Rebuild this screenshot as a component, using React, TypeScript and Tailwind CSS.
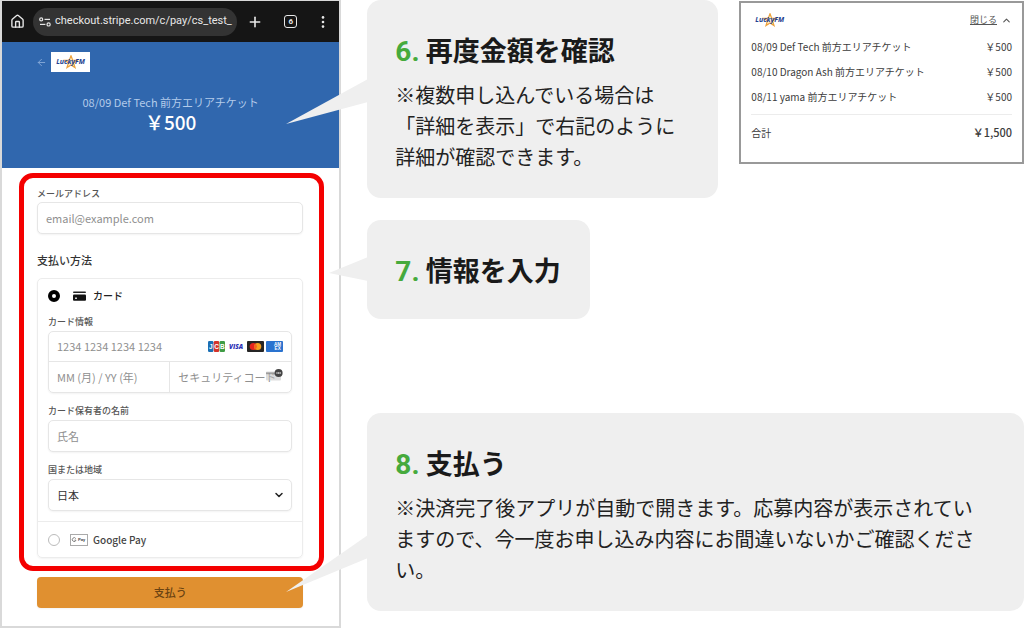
import type { ReactNode } from 'react';
import { ArrowLeft, ChevronDown, ChevronUp, House, Plus } from 'lucide-react';
import clsx from 'clsx';

interface TicketItem {
    name: string;
    price: string;
}

const items: TicketItem[] = [
    { name: '08/09 Def Tech 前方エリアチケット', price: '￥500' },
    { name: '08/10 Dragon Ash 前方エリアチケット', price: '￥500' },
    { name: '08/11 yama 前方エリアチケット', price: '￥500' },
];

const fieldClass =
    'block w-full h-8 rounded-[5px] border border-[#e6e6e6] bg-white px-2 text-[11px] text-[#333] shadow-xs placeholder:text-[#8f8f8f]';
const labelClass = 'block text-[9px] leading-3 font-medium text-[#555]';

function Logo() {
    return (
        <span className="relative inline-flex items-center justify-center">
            <svg viewBox="0 0 16 14" className="absolute h-[14px] w-4" aria-hidden="true">
                <path
                    d="M8 0.8 L9.6 5 L14.2 5.2 L10.6 8 L12 12.6 L8 10 L4 12.6 L5.4 8 L1.8 5.2 L6.4 5 Z"
                    fill="#fff3d8"
                    stroke="#eda13a"
                    strokeWidth="1.2"
                />
            </svg>
            <span className="relative font-['Open_Sans',sans-serif] text-[7px] leading-[14px] font-bold text-[#23408f] italic">
                LuckyFM
            </span>
        </span>
    );
}

function BrowserBar() {
    return (
        <div className="flex h-[41px] items-center bg-[#151515] pr-[14px] pl-2 text-[#e8e8e8]">
            <button type="button" aria-label="ホーム">
                <House className="h-[15px] w-[15px]" strokeWidth={2.2} />
            </button>
            <div className="ml-2 flex h-7 min-w-0 flex-1 items-center gap-1 rounded-full bg-[#333] pl-[6px]">
                <svg viewBox="0 0 12 10" className="h-[10px] w-3 shrink-0" fill="none" stroke="currentColor" strokeWidth="1.2">
                    <circle cx="2.2" cy="2.4" r="1.5" />
                    <path d="M5.5 2.4 H11" />
                    <circle cx="9.6" cy="7.4" r="1.6" />
                    <path d="M1 7.4 H6.4" />
                </svg>
                <span className="font-[Roboto,sans-serif] text-[11px] whitespace-nowrap">
                    checkout.stripe.com/c/pay/cs_test_
                </span>
            </div>
            <button type="button" aria-label="新しいタブ" className="ml-[10px]">
                <Plus className="h-4 w-4" strokeWidth={2.4} />
            </button>
            <button
                type="button"
                className="ml-[21px] flex h-[13px] w-[13px] items-center justify-center rounded-[3px] border-[1.5px] border-current font-[Roboto,sans-serif] text-[8px] leading-none font-bold"
            >
                6
            </button>
            <button type="button" aria-label="メニュー" className="ml-6">
                <svg viewBox="0 0 4 14" className="h-[14px] w-1" fill="currentColor">
                    <circle cx="2" cy="2.4" r="1.3" />
                    <circle cx="2" cy="7" r="1.3" />
                    <circle cx="2" cy="11.6" r="1.3" />
                </svg>
            </button>
        </div>
    );
}

function CardBrands() {
    return (
        <div className="flex gap-[2px]">
            <svg viewBox="0 0 17 11" className="h-[11px] w-[17px]">
                <rect x="0" y="0" width="5.4" height="11" rx="1.2" fill="#1b6fb4" />
                <rect x="5.8" y="0" width="5.4" height="11" rx="1.2" fill="#d4342b" />
                <rect x="11.6" y="0" width="5.4" height="11" rx="1.2" fill="#3f9c45" />
                <g fill="#fff" fontFamily="Liberation Sans" fontWeight="bold" fontSize="6.5" textAnchor="middle">
                    <text x="2.7" y="7.8">J</text>
                    <text x="8.5" y="7.8">C</text>
                    <text x="14.3" y="7.8">B</text>
                </g>
            </svg>
            <svg viewBox="0 0 18 11" className="h-[11px] w-[18px]">
                <text x="9" y="8" fill="#2b2fb5" fontFamily="Open Sans" fontStyle="italic" fontWeight="800" fontSize="6.4" textAnchor="middle">
                    VISA
                </text>
            </svg>
            <svg viewBox="0 0 17 11" className="h-[11px] w-[17px]">
                <rect width="17" height="11" rx="1" fill="#252525" />
                <circle cx="6.3" cy="5.5" r="3.6" fill="#e5241d" />
                <circle cx="10.7" cy="5.5" r="3.6" fill="#f5a01e" />
                <path d="M8.5 2.65 A3.6 3.6 0 0 1 8.5 8.35 A3.6 3.6 0 0 1 8.5 2.65" fill="#f2651f" />
            </svg>
            <svg viewBox="0 0 17 11" className="h-[11px] w-[17px]">
                <rect width="17" height="11" rx="1" fill="#2a73cf" />
                <g fill="#fff" fontFamily="Liberation Sans" fontWeight="bold" fontSize="4.6">
                    <text x="8" y="5.2">AM</text>
                    <text x="8.6" y="9.2">EX</text>
                </g>
            </svg>
        </div>
    );
}

function PaymentForm() {
    return (
        <div className="mt-[5px] mr-[15px] ml-[17px] rounded-[14px] border-5 border-[#f40000] pt-[10px] pr-4 pb-2 pl-[13px]">
            <label htmlFor="email" className={labelClass}>メールアドレス</label>
            <input id="email" type="email" placeholder="email@example.com" className={clsx(fieldClass, 'mt-[2px]')} />

            <h2 className="mt-[18px] text-[11px] leading-4 font-medium text-[#333]">支払い方法</h2>

            <div className="mt-[10px] rounded-[5px] border border-[#ececec] shadow-xs">
                <div className="px-[10px] pt-[9px] pb-[10px]">
                    <div className="flex h-4 items-center">
                        <input
                            id="pay-card"
                            type="radio"
                            name="method"
                            defaultChecked
                            className="h-3 w-3 appearance-none rounded-full border-4 border-black bg-white"
                        />
                        <label htmlFor="pay-card" className="flex items-center text-[10px] leading-4 font-medium text-[#222]">
                            <svg viewBox="0 0 13 10" className="mr-[7px] ml-[13px] h-[10px] w-[13px]">
                                <rect y="0.5" width="13" height="1.6" rx="0.8" fill="#222" />
                                <rect y="3.4" width="13" height="6.4" rx="1" fill="#111" />
                                <rect x="2" y="6.6" width="2" height="1.2" fill="#fff" />
                            </svg>
                            カード
                        </label>
                    </div>

                    <label htmlFor="card-number" className={clsx(labelClass, 'mt-3')}>カード情報</label>
                    <div className="mt-[3px] rounded-[5px] border border-[#e6e6e6] shadow-xs">
                        <div className="flex h-[30px] items-center border-b border-[#e6e6e6] px-2">
                            <input
                                id="card-number"
                                type="text"
                                placeholder="1234 1234 1234 1234"
                                className="min-w-0 flex-1 text-[11px] placeholder:text-[#8f8f8f]"
                            />
                            <CardBrands />
                        </div>
                        <div className="flex h-[30px]">
                            <input
                                type="text"
                                aria-label="有効期限"
                                placeholder="MM (月) / YY (年)"
                                className="w-1/2 border-r border-[#e6e6e6] px-2 text-[11px] placeholder:text-[#8f8f8f]"
                            />
                            <div className="relative w-1/2">
                                <input
                                    type="text"
                                    aria-label="セキュリティコード"
                                    placeholder="セキュリティコード"
                                    className="h-full w-full pl-2 text-[11px] placeholder:text-[#8f8f8f]"
                                />
                                <svg viewBox="0 0 18 12" className="absolute top-[7px] right-2 h-3 w-[18px]">
                                    <rect x="1" y="2.5" width="15" height="9" rx="1" fill="#bbb" fillOpacity="0.5" />
                                    <rect x="1" y="3.4" width="15" height="1.8" fill="#777" fillOpacity="0.6" />
                                    <circle cx="13.6" cy="4" r="4" fill="#444" />
                                    <path d="M11.4 4 H15.8" stroke="#ddd" strokeWidth="1.6" strokeDasharray="1.2 0.4" />
                                </svg>
                            </div>
                        </div>
                    </div>

                    <label htmlFor="holder" className={clsx(labelClass, 'mt-3')}>カード保有者の名前</label>
                    <input id="holder" type="text" placeholder="氏名" className={clsx(fieldClass, 'mt-[3px]')} />

                    <label htmlFor="country" className={clsx(labelClass, 'mt-3')}>国または地域</label>
                    <div className="relative mt-[3px]">
                        <select id="country" className={clsx(fieldClass, 'appearance-none')}>
                            <option>日本</option>
                        </select>
                        <ChevronDown
                            className="pointer-events-none absolute top-[10px] right-[7px] h-3 w-3 text-[#222]"
                            strokeWidth={3}
                        />
                    </div>
                </div>

                <div className="flex h-9 items-center border-t border-[#ececec] px-[10px]">
                    <input
                        id="pay-google"
                        type="radio"
                        name="method"
                        className="h-3 w-3 appearance-none rounded-full border border-[#bbb] bg-white checked:border-4 checked:border-black"
                    />
                    <label htmlFor="pay-google" className="flex items-center text-[10px] font-medium text-[#444]">
                        <svg viewBox="0 0 18 12" className="mr-[5px] ml-[10px] h-3 w-[18px]">
                            <rect x="0.5" y="0.5" width="17" height="11" fill="#fff" stroke="#aaa" />
                            <path d="M5.8 4.6 A1.9 1.9 0 1 0 6 6.2 H4.4" fill="none" stroke="#777" strokeWidth="0.9" />
                            <text x="8" y="7.4" fill="#555" fontFamily="Roboto" fontWeight="bold" fontSize="4.4">Pay</text>
                        </svg>
                        Google Pay
                    </label>
                </div>
            </div>
        </div>
    );
}

function PhoneScreen() {
    return (
        <section className="w-1/3 min-w-[320px] shrink-0 border-2 border-t border-[#d9d9d9] bg-white pb-[18px]">
            <BrowserBar />
            <header className="h-[126px] bg-[#3067ae] pt-[10px]">
                <div className="flex items-center gap-1 pl-[34px]">
                    <a href="#back" aria-label="戻る" className="text-[#86a9d8]">
                        <ArrowLeft className="h-[11px] w-[11px]" />
                    </a>
                    <div className="flex h-5 w-[39px] items-center justify-center bg-white">
                        <Logo />
                    </div>
                </div>
                <p className="mt-[22px] text-center text-[11px] leading-4 text-[#b3cbea]">
                    08/09 Def Tech 前方エリアチケット
                </p>
                <p className="text-center text-[19px] leading-6 font-medium text-white">￥500</p>
            </header>
            <PaymentForm />
            <button
                type="button"
                className="mt-[6px] mr-9 ml-[35px] block h-[31px] w-[calc(100%-71px)] rounded bg-[#e09030] text-[11px] font-medium text-[#6b4312] shadow-xs"
            >
                支払う
            </button>
        </section>
    );
}

function Receipt() {
    return (
        <section className="mt-px min-w-0 flex-1 border-2 border-[#999] bg-white px-[10px] pt-[9px] pb-[12px] text-[#3c3c3c]">
            <div className="flex h-4 items-center justify-between pl-1">
                <Logo />
                <button type="button" className="flex items-center gap-1 text-[9px] text-[#555]">
                    <span className="underline">閉じる</span>
                    <ChevronUp className="h-[11px] w-[11px]" strokeWidth={2.4} />
                </button>
            </div>
            <table className="mt-[6px] w-full text-[10px]">
                <tbody>
                    {items.map((item) => (
                        <tr key={item.name} className="h-[25px]">
                            <td>{item.name}</td>
                            <td className="text-right">{item.price}</td>
                        </tr>
                    ))}
                </tbody>
                <tfoot>
                    <tr className="h-[5px]"><td colSpan={2} /></tr>
                    <tr className="h-9 border-t border-[#ececec]">
                        <td>合計</td>
                        <td className="text-right text-[11px] font-medium">￥1,500</td>
                    </tr>
                </tfoot>
            </table>
        </section>
    );
}

interface StepBubbleProps {
    no: number;
    title: string;
    className?: string;
    tail: ReactNode;
    children?: ReactNode;
}

function StepBubble({ no, title, className, tail, children }: StepBubbleProps) {
    return (
        <section className={clsx('relative rounded-[14px] bg-[#efefef] px-7', className)}>
            {tail}
            <h2 className="h-[39px] text-[27px] leading-[39px] font-bold whitespace-nowrap text-[#1a1a1a]">
                <span className="font-[Roboto,sans-serif] text-[28px] text-[#46aa3c]">{no}.</span> {title}
            </h2>
            {children && <p className="mt-[10px] text-[20px] leading-[31px] text-[#222]">{children}</p>}
        </section>
    );
}

export default function App() {
    return (
        <main
            lang="ja"
            className="flex min-h-screen items-start gap-[26px] bg-white font-['Noto_Sans_CJK_JP',sans-serif]"
        >
            <PhoneScreen />
            <div className="min-w-0 flex-1">
                <div className="flex items-start gap-[21px]">
                    <StepBubble
                        no={6}
                        title="再度金額を確認"
                        className="w-[351px] shrink-0 pt-[30px] pb-[26px]"
                        tail={
                            <svg viewBox="0 0 82 46" className="absolute top-[79px] -left-[81px] h-[46px] w-[82px]">
                                <path d="M0 45 L82 0 V23 Z" fill="#efefef" />
                            </svg>
                        }
                    >
                        ※複数申し込んでいる場合は
                        <br />
                        「詳細を表示」で右記のように
                        <br />
                        詳細が確認できます。
                    </StepBubble>
                    <Receipt />
                </div>
                <StepBubble
                    no={7}
                    title="情報を入力"
                    className="mt-[22px] w-[223px] py-[30px]"
                    tail={
                        <svg viewBox="0 0 39 24" className="absolute top-[37px] -left-[38px] h-6 w-[39px]">
                            <path d="M0 16 L39 0 V24 Z" fill="#efefef" />
                        </svg>
                    }
                />
                <StepBubble
                    no={8}
                    title="支払う"
                    className="mt-[94px] pt-[30px] pb-[26px]"
                    tail={
                        <svg viewBox="0 0 82 57" className="absolute top-[122px] -left-[81px] h-[57px] w-[82px]">
                            <path d="M0 57 L82 0 V23 Z" fill="#efefef" />
                        </svg>
                    }
                >
                    ※決済完了後アプリが自動で開きます。応募内容が表示されてい
                    <br />
                    ますので、今一度お申し込み内容にお間違いないかご確認くださ
                    <br />
                    い。
                </StepBubble>
            </div>
        </main>
    );
}
